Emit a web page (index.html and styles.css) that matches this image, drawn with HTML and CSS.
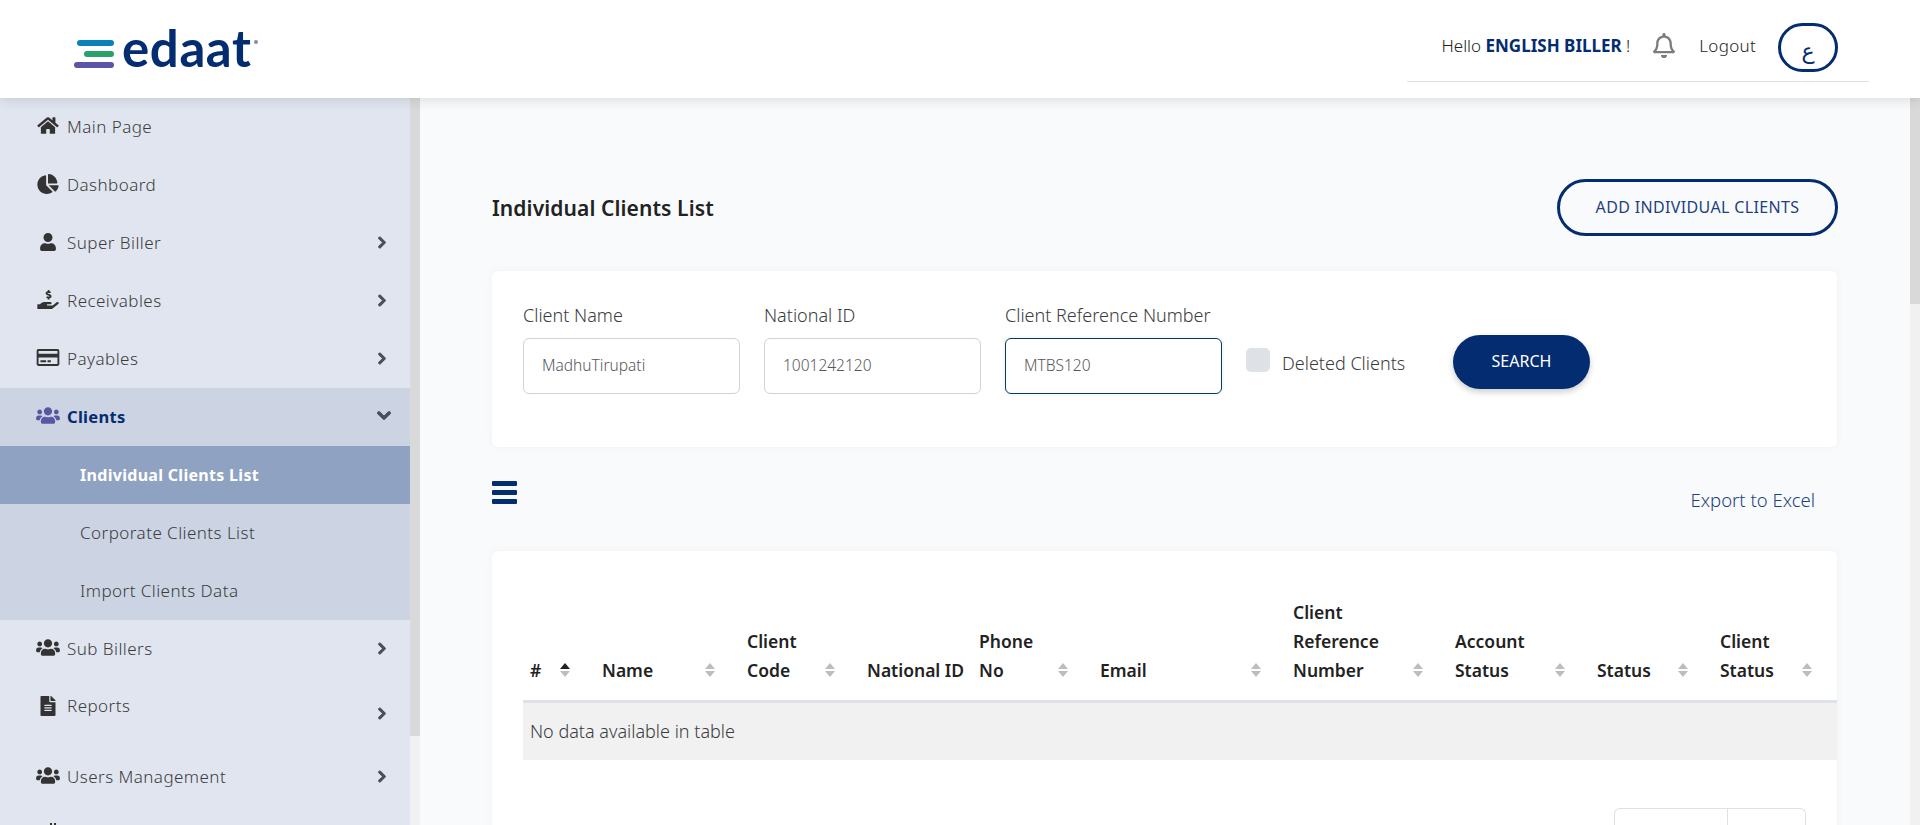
FILE: index.html
```html
<!DOCTYPE html>
<html lang="en">
<head>
    <meta charset="UTF-8">
    <meta name="viewport" content="width=device-width, initial-scale=1.0">
    <title>Individual Clients List</title>
    <link rel="stylesheet" href="styles.css">
</head>
<body>
    <header class="topbar">
        <div class="logo">
            <div class="logo-bars">
                <span class="bar bar-blue"></span>
                <span class="bar bar-green"></span>
                <span class="bar bar-purple"></span>
            </div>
            <span class="logo-text">edaat</span>
            <span class="logo-dot"></span>
        </div>
        <div class="user-box">
            <span class="hello">Hello <b>ENGLISH BILLER</b> !</span>
            <svg class="bell" viewBox="0 0 448 512"><path d="M439.39 362.29c-19.32-20.76-55.47-51.99-55.47-154.29 0-77.7-54.48-139.9-127.94-155.16V32c0-17.67-14.32-32-31.98-32s-31.98 14.33-31.98 32v20.84C118.56 68.1 64.08 130.3 64.08 208c0 102.3-36.15 133.53-55.47 154.29-6 6.45-8.66 14.16-8.61 21.71.11 16.4 12.98 32 32.1 32h383.8c19.12 0 32-15.6 32.1-32 .05-7.55-2.61-15.27-8.61-21.71zM67.53 368c21.22-27.97 44.42-74.33 44.53-159.42 0-.2-.06-.38-.06-.58 0-61.86 50.14-112 112-112s112 50.14 112 112c0 .2-.06.38-.06.58.11 85.1 23.31 131.46 44.53 159.42H67.53zM224 512c35.32 0 63.97-28.65 63.97-64H160.03c0 35.35 28.65 64 63.97 64z"/></svg>
            <a class="logout">Logout</a>
            <button class="lang">ع</button>
        </div>
    </header>

    <div class="layout">
        <aside class="sidebar">
            <nav class="menu">
                <a class="item">
                    <svg class="ico" viewBox="0 0 576 512"><path d="M280.37 148.26L96 300.11V464a16 16 0 0 0 16 16l112.06-.29a16 16 0 0 0 15.92-16V368a16 16 0 0 1 16-16h64a16 16 0 0 1 16 16v95.64a16 16 0 0 0 16 16.05L464 480a16 16 0 0 0 16-16V300L295.67 148.26a12.19 12.19 0 0 0-15.3 0zM571.6 251.47L488 182.56V44.05a12 12 0 0 0-12-12h-56a12 12 0 0 0-12 12v72.61L318.47 43a48 48 0 0 0-61 0L4.34 251.47a12 12 0 0 0-1.6 16.9l25.5 31A12 12 0 0 0 45.15 301l235.22-193.74a12.19 12.19 0 0 1 15.3 0L530.9 301a12 12 0 0 0 16.9-1.6l25.5-31a12 12 0 0 0-1.7-16.93z"/></svg>
                    <span>Main Page</span>
                </a>
                <a class="item">
                    <svg class="ico ico-pie" viewBox="0 0 544 512"><path d="M527.79 288H290.5l158.03 158.03c6.04 6.04 15.98 6.53 22.19.68 38.7-36.46 65.32-85.61 73.13-140.86 1.34-9.46-6.51-17.85-16.06-17.85zm-15.83-64.8C503.72 103.74 408.26 8.28 288.8.04 279.68-.59 272 7.1 272 16.24V240h223.77c9.14 0 16.82-7.68 16.19-16.8zM224 288V50.71c0-9.55-8.39-17.4-17.84-16.06C86.99 51.49-4.1 155.6.14 280.37 4.5 408.51 114.83 513.59 243.03 511.98c50.4-.63 96.97-16.87 135.26-44.03 7.9-5.6 8.42-17.23 1.57-24.08L224 288z"/></svg>
                    <span>Dashboard</span>
                </a>
                <a class="item">
                    <svg class="ico ico-user" viewBox="0 0 448 512"><path d="M224 256c70.7 0 128-57.3 128-128S294.7 0 224 0 96 57.3 96 128s57.3 128 128 128zm89.6 32h-16.7c-22.2 10.2-46.9 16-72.9 16s-50.6-5.8-72.9-16h-16.7C60.2 288 0 348.2 0 422.4V464c0 26.5 21.5 48 48 48h352c26.5 0 48-21.5 48-48v-41.6c0-74.2-60.2-134.4-134.4-134.4z"/></svg>
                    <span>Super Biller</span>
                    <svg class="chev" viewBox="0 0 320 512"><path d="M285.476 272.971L91.132 467.314c-9.373 9.373-24.569 9.373-33.941 0l-22.667-22.667c-9.357-9.357-9.375-24.522-.04-33.901L188.505 256 34.484 101.255c-9.335-9.379-9.317-24.544.04-33.901l22.667-22.667c9.373-9.373 24.569-9.373 33.941 0L285.475 239.03c9.373 9.372 9.373 24.568.001 33.941z"/></svg>
                </a>
                <a class="item">
                    <svg class="ico" viewBox="0 0 576 512"><path d="M271.06,144.3l54.27,14.3a8.59,8.59,0,0,1,6.63,8.1c0,4.6-4.09,8.4-9.12,8.4h-35.6a30,30,0,0,1-11.19-2.2c-5.24-2.2-11.28-1.7-15.3,2l-19,17.5a11.68,11.68,0,0,0-2.25,2.66,11.42,11.42,0,0,0,3.88,15.74,83.42,83.42,0,0,0,34.51,11.5V240c0,8.8,7.83,16,17.37,16h17.37c9.55,0,17.38-7.2,17.38-16V222.4c32.93-3.6,57.84-31,53.5-63-3.15-23-22.46-41.3-46.56-47.7L282.68,97.4a8.59,8.59,0,0,1-6.63-8.1c0-4.6,4.09-8.4,9.12-8.4h35.6A30,30,0,0,1,332,83.1c5.23,2.2,11.28,1.7,15.3-2l19-17.5A11.31,11.31,0,0,0,368.47,61a11.43,11.43,0,0,0-3.84-15.78,83.82,83.82,0,0,0-34.52-11.5V16c0-8.8-7.82-16-17.37-16H295.37C285.82,0,278,7.2,278,16V33.6c-32.89,3.6-57.85,31-53.51,63C227.63,119.6,247,137.9,271.06,144.3ZM565.27,328.1c-11.8-10.7-30.2-10-42.6,0L430.27,402a63.64,63.64,0,0,1-40,14H272a16,16,0,0,1,0-32h78.29c15.9,0,30.71-10.9,33.25-26.6a31.2,31.2,0,0,0,.46-5.46A32,32,0,0,0,352,320H192a117.66,117.66,0,0,0-74.1,26.29L71.4,384H16A16,16,0,0,0,0,400v96a16,16,0,0,0,16,16H372.77a64,64,0,0,0,40-14L564,377a32,32,0,0,0,1.28-48.9Z"/></svg>
                    <span>Receivables</span>
                    <svg class="chev" viewBox="0 0 320 512"><path d="M285.476 272.971L91.132 467.314c-9.373 9.373-24.569 9.373-33.941 0l-22.667-22.667c-9.357-9.357-9.375-24.522-.04-33.901L188.505 256 34.484 101.255c-9.335-9.379-9.317-24.544.04-33.901l22.667-22.667c9.373-9.373 24.569-9.373 33.941 0L285.475 239.03c9.373 9.372 9.373 24.568.001 33.941z"/></svg>
                </a>
                <a class="item">
                    <svg class="ico ico-card" viewBox="0 0 24 18"><path d="M22 0H2C.8 0 0 .9 0 2v14c0 1.100.8 2 2 2h20c1.200 0 2-.9 2-2V2c0-1.100-.8-2-2-2zm0 16H2V9h20v7zm0-11H2V2h20v3z"/><path d="M4 12h6v2H4zM11.500 12H15v2h-3.500z"/></svg>
                    <span>Payables</span>
                    <svg class="chev" viewBox="0 0 320 512"><path d="M285.476 272.971L91.132 467.314c-9.373 9.373-24.569 9.373-33.941 0l-22.667-22.667c-9.357-9.357-9.375-24.522-.04-33.901L188.505 256 34.484 101.255c-9.335-9.379-9.317-24.544.04-33.901l22.667-22.667c9.373-9.373 24.569-9.373 33.941 0L285.475 239.03c9.373 9.372 9.373 24.568.001 33.941z"/></svg>
                </a>
                <div class="group">
                    <a class="item item-open">
                        <svg class="ico ico-purple" viewBox="0 0 640 512"><path d="M96 224c35.3 0 64-28.7 64-64s-28.700-64-64-64-64 28.700-64 64 28.700 64 64 64zm448 0c35.300 0 64-28.700 64-64s-28.700-64-64-64-64 28.700-64 64 28.700 64 64 64zm32 32h-64c-17.600 0-33.500 7.100-45.100 18.600 40.300 22.100 68.900 62 75.100 109.400h66c17.700 0 32-14.300 32-32v-32c0-35.300-28.700-64-64-64zm-256 0c61.900 0 112-50.100 112-112S381.900 32 320 32 208 82.100 208 144s50.100 112 112 112zm76.800 32h-8.300c-20.800 10-43.900 16-68.500 16s-47.600-6-68.500-16h-8.300C179.600 288 128 339.600 128 403.200V432c0 26.500 21.500 48 48 48h288c26.500 0 48-21.500 48-48v-28.800c0-63.600-51.600-115.200-115.200-115.200zm-223.700-13.400C161.500 263.100 145.600 256 128 256H64c-35.300 0-64 28.700-64 64v32c0 17.700 14.300 32 32 32h65.900c6.300-47.400 34.900-87.300 75.200-109.400z"/></svg>
                        <span>Clients</span>
                        <svg class="chev chev-down" viewBox="0 0 448 512"><path d="M207.029 381.476L12.686 187.132c-9.373-9.373-9.373-24.569 0-33.941l22.667-22.667c9.357-9.357 24.522-9.375 33.901-.04L224 284.505l154.745-154.021c9.379-9.335 24.544-9.317 33.901.04l22.667 22.667c9.373 9.373 9.373 24.569 0 33.941L240.971 381.476c-9.373 9.372-24.569 9.372-33.942 0z"/></svg>
                    </a>
                    <a class="sub sub-active">Individual Clients List</a>
                    <a class="sub">Corporate Clients List</a>
                    <a class="sub">Import Clients Data</a>
                </div>
                <a class="item">
                    <svg class="ico" viewBox="0 0 640 512"><path d="M96 224c35.300 0 64-28.700 64-64s-28.700-64-64-64-64 28.700-64 64 28.700 64 64 64zm448 0c35.300 0 64-28.700 64-64s-28.700-64-64-64-64 28.700-64 64 28.700 64 64 64zm32 32h-64c-17.600 0-33.500 7.100-45.100 18.600 40.300 22.100 68.900 62 75.100 109.400h66c17.700 0 32-14.300 32-32v-32c0-35.300-28.700-64-64-64zm-256 0c61.900 0 112-50.100 112-112S381.900 32 320 32 208 82.100 208 144s50.100 112 112 112zm76.800 32h-8.300c-20.800 10-43.900 16-68.500 16s-47.600-6-68.500-16h-8.300C179.600 288 128 339.600 128 403.200V432c0 26.500 21.500 48 48 48h288c26.500 0 48-21.500 48-48v-28.800c0-63.600-51.600-115.200-115.200-115.200zm-223.700-13.400C161.500 263.100 145.600 256 128 256H64c-35.300 0-64 28.700-64 64v32c0 17.700 14.300 32 32 32h65.900c6.300-47.400 34.900-87.300 75.200-109.400z"/></svg>
                    <span>Sub Billers</span>
                    <svg class="chev" viewBox="0 0 320 512"><path d="M285.476 272.971L91.132 467.314c-9.373 9.373-24.569 9.373-33.941 0l-22.667-22.667c-9.357-9.357-9.375-24.522-.04-33.901L188.505 256 34.484 101.255c-9.335-9.379-9.317-24.544.04-33.901l22.667-22.667c9.373-9.373 24.569-9.373 33.941 0L285.475 239.03c9.373 9.372 9.373 24.568.001 33.941z"/></svg>
                </a>
                <a class="item item-tall">
                    <svg class="ico ico-file" viewBox="0 0 384 512"><path d="M224 136V0H24C10.700 0 0 10.700 0 24v464c0 13.300 10.700 24 24 24h336c13.300 0 24-10.700 24-24V160H248c-13.200 0-24-10.800-24-24zm64 236c0 6.600-5.400 12-12 12H108c-6.600 0-12-5.400-12-12v-8c0-6.600 5.400-12 12-12h168c6.600 0 12 5.400 12 12v8zm0-64c0 6.600-5.400 12-12 12H108c-6.600 0-12-5.400-12-12v-8c0-6.600 5.400-12 12-12h168c6.600 0 12 5.400 12 12v8zm0-72v8c0 6.600-5.400 12-12 12H108c-6.600 0-12-5.400-12-12v-8c0-6.600 5.400-12 12-12h168c6.600 0 12 5.400 12 12zm96-114.100v6.100H256V0h6.100c6.400 0 12.500 2.500 17 7l97.900 98c4.500 4.500 7 10.600 7 16.900z"/></svg>
                    <span>Reports</span>
                    <svg class="chev" viewBox="0 0 320 512"><path d="M285.476 272.971L91.132 467.314c-9.373 9.373-24.569 9.373-33.941 0l-22.667-22.667c-9.357-9.357-9.375-24.522-.04-33.901L188.505 256 34.484 101.255c-9.335-9.379-9.317-24.544.04-33.901l22.667-22.667c9.373-9.373 24.569-9.373 33.941 0L285.475 239.03c9.373 9.372 9.373 24.568.001 33.941z"/></svg>
                </a>
                <a class="item">
                    <svg class="ico" viewBox="0 0 640 512"><path d="M96 224c35.300 0 64-28.700 64-64s-28.700-64-64-64-64 28.700-64 64 28.700 64 64 64zm448 0c35.300 0 64-28.700 64-64s-28.700-64-64-64-64 28.700-64 64 28.700 64 64 64zm32 32h-64c-17.600 0-33.500 7.100-45.100 18.600 40.300 22.100 68.900 62 75.100 109.400h66c17.700 0 32-14.300 32-32v-32c0-35.300-28.700-64-64-64zm-256 0c61.900 0 112-50.100 112-112S381.900 32 320 32 208 82.100 208 144s50.100 112 112 112zm76.800 32h-8.300c-20.800 10-43.900 16-68.500 16s-47.600-6-68.500-16h-8.300C179.600 288 128 339.600 128 403.200V432c0 26.500 21.500 48 48 48h288c26.500 0 48-21.500 48-48v-28.800c0-63.600-51.600-115.200-115.200-115.200zm-223.700-13.400C161.500 263.100 145.600 256 128 256H64c-35.300 0-64 28.700-64 64v32c0 17.700 14.300 32 32 32h65.900c6.300-47.400 34.900-87.300 75.200-109.400z"/></svg>
                    <span>Users Management</span>
                    <svg class="chev" viewBox="0 0 320 512"><path d="M285.476 272.971L91.132 467.314c-9.373 9.373-24.569 9.373-33.941 0l-22.667-22.667c-9.357-9.357-9.375-24.522-.04-33.901L188.505 256 34.484 101.255c-9.335-9.379-9.317-24.544.04-33.901l22.667-22.667c9.373-9.373 24.569-9.373 33.941 0L285.475 239.03c9.373 9.372 9.373 24.568.001 33.941z"/></svg>
                </a>
                <a class="item item-cut">
                    <svg class="ico" viewBox="0 0 24 19"><path d="M14 0h2v2h-2zM18 0h2v2h-2z"/></svg>
                </a>
            </nav>
            <div class="rail"><div class="thumb thumb-side"></div></div>
        </aside>

        <main class="content">
            <div class="title-row">
                <h2>Individual Clients List</h2>
                <button class="btn-outline">ADD INDIVIDUAL CLIENTS</button>
            </div>

            <form class="card filter">
                <div class="field">
                    <label for="clientName">Client Name</label>
                    <input type="text" id="clientName" value="MadhuTirupati">
                </div>
                <div class="field">
                    <label for="nationalId">National ID</label>
                    <input type="text" id="nationalId" value="1001242120">
                </div>
                <div class="field">
                    <label for="refNo">Client Reference Number</label>
                    <input type="text" id="refNo" class="focused" value="MTBS120">
                </div>
                <div class="deleted">
                    <span class="check"></span>
                    <span class="deleted-text">Deleted Clients</span>
                </div>
                <button type="button" class="btn-search">SEARCH</button>
            </form>

            <div class="toolbar">
                <div class="burger"><span></span><span></span><span></span></div>
                <a class="export">Export to Excel</a>
            </div>

            <div class="card table-card">
                <table>
                    <colgroup>
                        <col class="c1"><col class="c2"><col class="c3"><col class="c4"><col class="c5">
                        <col class="c6"><col class="c7"><col class="c8"><col class="c9"><col class="c10">
                    </colgroup>
                    <thead>
                        <tr>
                            <th><div class="th"><span>#</span><i class="sort sort-asc"></i></div></th>
                            <th><div class="th"><span>Name</span><i class="sort"></i></div></th>
                            <th><div class="th"><span>Client<br>Code</span><i class="sort"></i></div></th>
                            <th><div class="th"><span>National ID</span></div></th>
                            <th><div class="th"><span>Phone<br>No</span><i class="sort"></i></div></th>
                            <th><div class="th"><span>Email</span><i class="sort"></i></div></th>
                            <th><div class="th"><span>Client<br>Reference<br>Number</span><i class="sort"></i></div></th>
                            <th><div class="th"><span>Account<br>Status</span><i class="sort"></i></div></th>
                            <th><div class="th"><span>Status</span><i class="sort"></i></div></th>
                            <th><div class="th"><span>Client<br>Status</span><i class="sort"></i></div></th>
                        </tr>
                    </thead>
                    <tbody>
                        <tr><td colspan="10">No data available in table</td></tr>
                    </tbody>
                </table>
                <div class="pager">
                    <a class="page prev"></a>
                    <a class="page next"></a>
                </div>
            </div>
        </main>
        <div class="rail"><div class="thumb thumb-main"></div></div>
    </div>
</body>
</html>
```

FILE: styles.css
```css
* {
    box-sizing: border-box;
}

html, body {
    height: 100%;
}

body {
    margin: 0;
    display: flex;
    flex-direction: column;
    overflow: hidden;
    font-family: "Noto Sans", "Open Sans", sans-serif;
    font-weight: 300;
    font-size: 17px;
    color: #3a3c40;
    background-color: #f9fafc;
}

/* top bar */
.topbar {
    flex: 0 0 98px;
    display: flex;
    justify-content: space-between;
    align-items: flex-start;
    background: white;
    box-shadow: 0 2px 12px rgba(0,0,0,0.12);
    position: relative;
    z-index: 2;
    padding-right: 51px;
}

.logo {
    display: flex;
    align-items: flex-start;
    margin: 22px 0 0 74px;
}

.logo-bars {
    width: 40px;
    margin-top: 18px;
    display: flex;
    flex-direction: column;
    align-items: flex-end;
    gap: 5px;
}

.bar {
    display: block;
    height: 6px;
    border-radius: 3px;
}

.bar-blue { width: 37px; background: #0a81bb; }
.bar-green { width: 30px; background: #2aa16a; }
.bar-purple { width: 40px; background: #5b55a5; }

.logo-text {
    margin: -2px 0 0 8px;
    font-family: Lato, sans-serif;
    font-weight: 700;
    font-size: 51px;
    letter-spacing: 0.6px;
    line-height: 56px;
    color: #042c70;
}

.logo-dot {
    width: 4px;
    height: 4px;
    margin: 18px 0 0 2px;
    border-radius: 50%;
    background: #7f8db5;
}

.user-box {
    width: 462px;
    height: 82px;
    padding: 23px 31px 0 0;
    display: flex;
    justify-content: flex-end;
    align-items: flex-start;
    border-bottom: 1px solid #e0e0e0;
}

.hello {
    margin-top: 11px;
    color: #222;
    line-height: 24px;
}

.hello b {
    color: #042c70;
    font-weight: 700;
}

.bell {
    width: 22px;
    height: 25px;
    margin: 10px 24px 0 23px;
    fill: #7c7c7c;
}

.logout {
    margin: 11px 22px 0 0;
    line-height: 24px;
    color: #222;
    letter-spacing: 0.3px;
}

.lang {
    width: 60px;
    height: 49px;
    padding: 8px 0 0;
    border: 3px solid #042c70;
    border-radius: 25px;
    background: white;
    color: #042c70;
    font-family: "DejaVu Sans", sans-serif;
    font-size: 22px;
}

/* layout */
.layout {
    flex: 1;
    min-height: 0;
    display: flex;
}

.sidebar {
    flex: 0 0 420px;
    display: flex;
    overflow: hidden;
}

.menu {
    flex: 1;
    background-color: #e1e5ef;
}

.rail {
    flex: 0 0 10px;
    background-color: #f1f1f1;
}

.thumb {
    background-color: #d9d9d9;
}

.thumb-side { height: 638px; }
.thumb-main { height: 206px; }

.item {
    height: 58px;
    display: flex;
    align-items: center;
    padding: 0 22px 2px 36px;
    letter-spacing: 0.45px;
}

.item-tall {
    height: 70px;
    align-items: flex-start;
    padding-top: 16px;
}

.item-tall .ico {
    margin-bottom: 0;
    margin-top: 2px;
}

.item-tall .chev {
    margin-top: 13px;
}

.item-cut {
    align-items: flex-start;
    padding-top: 17px;
}

.item span {
    flex: 1;
}

.ico {
    flex: 0 0 24px;
    height: 19px;
    margin: 0 7px 1px 0;
    fill: #333;
}

.ico-pie { height: 20px; }
.ico-user { height: 18px; }
.ico-card { height: 17px; }
.ico-file { height: 20px; }

.ico-purple {
    fill: #5b55a5;
}

.chev {
    flex: 0 0 12px;
    height: 13px;
    fill: #4d4f55;
    stroke: #4d4f55;
    stroke-width: 40;
}

.chev-down {
    flex-basis: 14px;
    height: 15px;
    margin-right: -3px;
    margin-bottom: 1px;
}

.group {
    background-color: #ccd3e3;
}

.item-open span {
    color: #042c70;
    font-size: 16.5px;
    letter-spacing: 0.3px;
    font-weight: 700;
}

.sub {
    display: flex;
    align-items: center;
    height: 58px;
    padding: 0 0 2px 80px;
    letter-spacing: 0.45px;
}

.sub-active {
    padding-bottom: 0;
    background-color: #90a2c1;
    color: white;
    font-size: 16px;
    letter-spacing: 0.3px;
    font-weight: 700;
}

/* content */
.content {
    flex: 1;
    min-width: 0;
    padding: 81px 73px 0 72px;
}

.title-row {
    height: 57px;
    display: flex;
    justify-content: space-between;
    align-items: center;
}

h2 {
    margin: 0;
    font-size: 21px;
    font-weight: 600;
    letter-spacing: 0.1px;
    color: #222;
}

.btn-outline {
    width: 281px;
    height: 57px;
    margin-right: -1px;
    padding-bottom: 3px;
    border: 3px solid #042c70;
    border-radius: 29px;
    background: transparent;
    color: #1f3f80;
    font-family: inherit;
    font-weight: 400;
    font-size: 16px;
    letter-spacing: 0.35px;
}

.card {
    background: white;
    border-radius: 6px;
    box-shadow: 0 0 8px rgba(0,0,0,0.04);
}

.filter {
    height: 176px;
    margin-top: 35px;
    padding: 32px 31px 0;
    display: flex;
    align-items: flex-start;
}

.field {
    width: 217px;
    margin-right: 24px;
}

.field label {
    display: block;
    height: 24px;
    margin-bottom: 11px;
    font-size: 18px;
    line-height: 24px;
}

.field input {
    width: 100%;
    height: 56px;
    padding: 0 18px 3px;
    border: 1px solid #d0d3da;
    border-radius: 6px;
    font-family: inherit;
    font-weight: 300;
    font-size: 15.5px;
    color: #55585e;
}

.field input.focused {
    border-color: #0a3566;
    box-shadow: 0 0 0 2px #f5fbf5;
}

.deleted {
    margin-top: 45px;
    display: flex;
    align-items: flex-start;
    gap: 12px;
    width: 207px;
}

.check {
    flex: 0 0 24px;
    height: 24px;
    border-radius: 5px;
    background-color: #dee2e7;
}

.deleted-text {
    font-size: 18px;
    line-height: 24px;
    padding-top: 3px;
}

.btn-search {
    width: 137px;
    height: 54px;
    margin-top: 32px;
    padding-bottom: 3px;
    border: 0;
    border-radius: 27px;
    background-color: #042c70;
    color: white;
    font-family: inherit;
    font-weight: 400;
    font-size: 16px;
    box-shadow: 0 3px 6px rgba(0,0,0,0.2);
}

.toolbar {
    height: 38px;
    margin: 34px 0 32px;
    display: flex;
    justify-content: space-between;
}

.burger {
    width: 25px;
    display: flex;
    flex-direction: column;
    gap: 4px;
}

.burger span {
    height: 5px;
    border-radius: 1px;
    background-color: #042c70;
}

.export {
    margin-right: 22px;
    font-size: 18.5px;
    line-height: 37px;
    color: #1f3f80;
}

.table-card {
    padding: 47px 0 0 31px;
    height: 320px;
}

table {
    width: 100%;
    table-layout: fixed;
    border-collapse: collapse;
}

.c1 { width: 72px; }
.c2 { width: 145px; }
.c3 { width: 120px; }
.c4 { width: 112px; }
.c5 { width: 121px; }
.c6 { width: 193px; }
.c7 { width: 162px; }
.c8 { width: 142px; }
.c9 { width: 123px; }
.c10 { width: 124px; }

th {
    padding: 0 0 15px 7px;
    border-bottom: 3px solid #dee2e6;
    text-align: left;
    vertical-align: bottom;
    font-weight: 600;
    font-size: 17.5px;
    line-height: 29px;
    color: #222;
}

.th {
    display: flex;
    justify-content: space-between;
    align-items: flex-end;
}

.sort {
    flex: 0 0 11px;
    height: 14px;
    margin: 0 24px 8px 0;
    position: relative;
}

/* two small triangles, same as the datatables arrows */
.sort::before, .sort::after {
    content: "";
    position: absolute;
    left: 0;
    border-left: 5.5px solid transparent;
    border-right: 5.5px solid transparent;
}

.sort::before {
    top: 0;
    border-bottom: 6px solid #bdbdbd;
}

.sort::after {
    bottom: 0;
    border-top: 6px solid #bdbdbd;
}

.sort-asc::before {
    border-bottom-color: #222;
}

td {
    height: 58px;
    padding: 0 7px;
    font-size: 18px;
    background-color: #f1f1f1;
}

.pager {
    width: 192px;
    height: 40px;
    margin: 48px 0 0 1091px;
    display: flex;
    border: 1px solid #dee2e6;
    border-bottom: 0;
    border-radius: 6px 6px 0 0;
}

.prev {
    width: 114px;
    border-right: 1px solid #dee2e6;
}

.next {
    width: 78px;
}
```
